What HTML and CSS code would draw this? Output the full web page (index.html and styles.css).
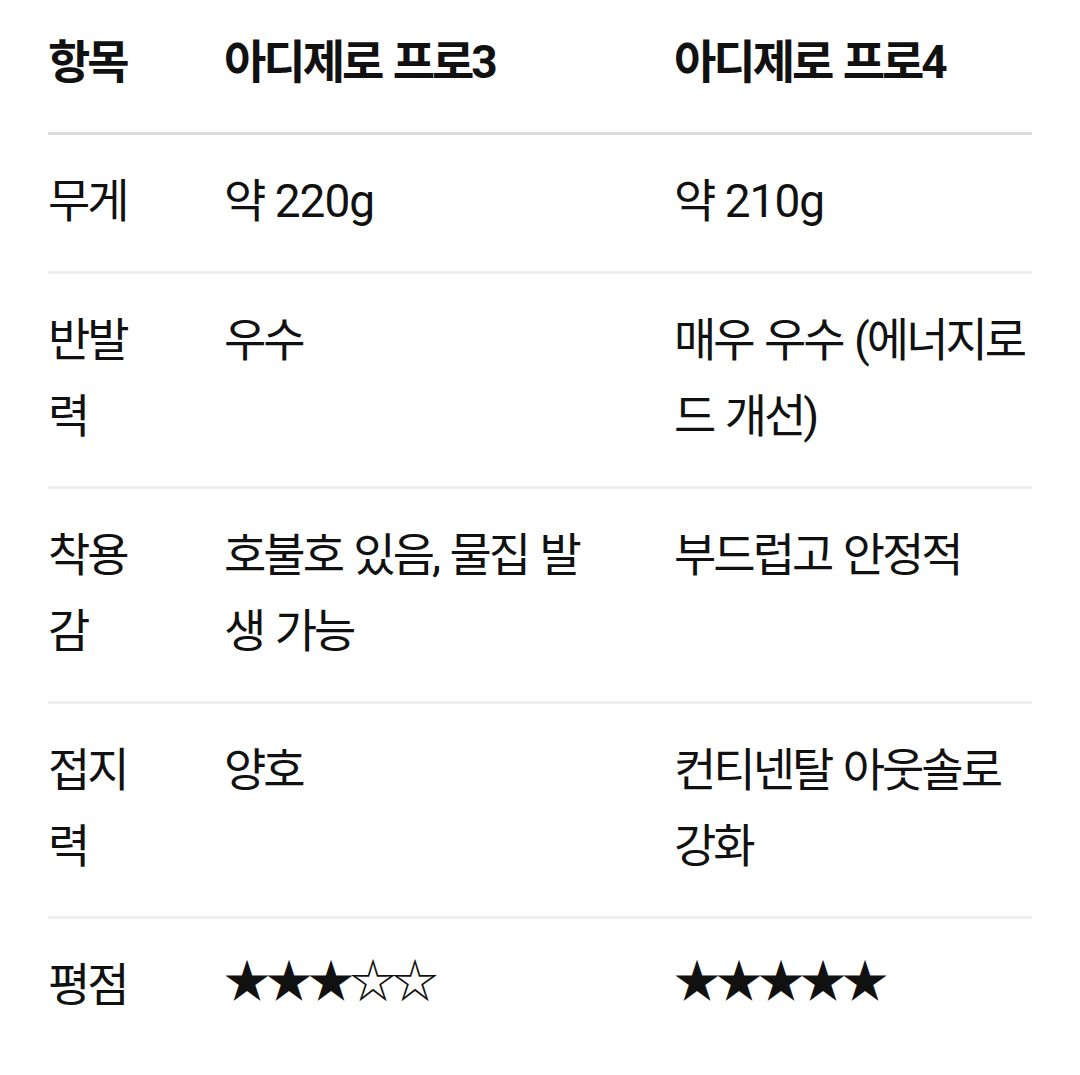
FILE: index.html
```html
<!DOCTYPE html>
<html lang="ko">
<head>
<meta charset="utf-8">
<link rel="stylesheet" href="styles.css">
</head>
<body>
<div class="table">
  <div class="row head">
    <div class="cell c1">항목</div>
    <div class="cell c2">아디제로 프로<span class="num">3</span></div>
    <div class="cell c3">아디제로 프로<span class="num">4</span></div>
  </div>
  <div class="row">
    <div class="cell c1">무게</div>
    <div class="cell c2">약 <span class="num">220g</span></div>
    <div class="cell c3">약 <span class="num">210g</span></div>
  </div>
  <div class="row">
    <div class="cell c1">반발력</div>
    <div class="cell c2">우수</div>
    <div class="cell c3">매우 우수 (에너지로드 개선)</div>
  </div>
  <div class="row">
    <div class="cell c1">착용감</div>
    <div class="cell c2">호불호 있음, 물집 발생 가능</div>
    <div class="cell c3">부드럽고 안정적</div>
  </div>
  <div class="row">
    <div class="cell c1">접지력</div>
    <div class="cell c2">양호</div>
    <div class="cell c3">컨티넨탈 아웃솔로 강화</div>
  </div>
  <div class="row last">
    <div class="cell c1">평점</div>
    <div class="cell c2 stars">★★★☆☆</div>
    <div class="cell c3 stars">★★★★★</div>
  </div>
</div>
</body>
</html>
```
FILE: styles.css
```css
html, body {
  margin: 0;
  padding: 0;
  background: #ffffff;
}
body {
  font-family: Roboto, "Noto Sans CJK KR", sans-serif;
  font-size: 46px;
  line-height: 76px;
  color: #111111;
  letter-spacing: -3px;
  word-spacing: 3px;
}
.num {
  letter-spacing: -1px;
}
.table {
  padding: 0 48px;
}
.row {
  display: grid;
  grid-template-columns: 176px 450px 1fr;
  border-bottom: 3px solid #efefef;
}
.row.head {
  border-bottom-color: #dcdcdc;
  font-weight: 700;
}
.row.last {
  border-bottom: none;
}
.cell {
  padding: 28px 0 32px;
}
.head .cell {
  padding-top: 24px;
}
.c1 {
  padding-right: 76px;
}
.c2 {
  padding-right: 90px;
}
.stars {
  letter-spacing: -4px;
  padding-top: 24px;
  padding-bottom: 36px;
}
```
